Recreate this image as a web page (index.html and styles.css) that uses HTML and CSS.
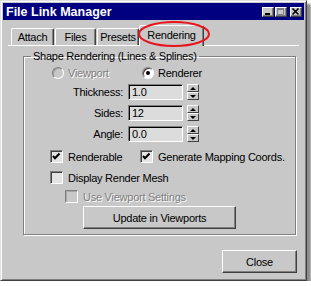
FILE: index.html
```html
<!DOCTYPE html>
<html>
<head>
    <title>File Link Manager</title>
    <link rel="stylesheet" href="styles.css">
</head>
<body>
    <div class="window">
        <div class="titlebar">
            <span class="title">File Link Manager</span>
            <div class="caption-buttons">
                <span class="cap-btn"><svg width="10" height="8" viewBox="0 0 10 8"><rect x="2" y="5" width="5" height="2" fill="#000"/></svg></span>
                <span class="cap-btn"><svg width="10" height="8" viewBox="0 0 10 8"><rect x="1.5" y="0.5" width="6" height="6" fill="none" stroke="#808080"/><rect x="1" y="0" width="7" height="2" fill="#808080"/></svg></span>
                <span class="cap-btn close-cap"><svg width="10" height="8" viewBox="0 0 10 8"><path d="M1.5 0.5 L7.5 6.5 M7.5 0.5 L1.5 6.5" stroke="#000" stroke-width="1.6"/></svg></span>
            </div>
        </div>

        <div class="tabs">
            <div class="tab tab-attach">Attach</div>
            <div class="tab tab-files">Files</div>
            <div class="tab tab-presets">Presets</div>
            <div class="tab tab-rendering active">Rendering</div>
        </div>

        <div class="panel">
            <fieldset class="group">
                <legend>Shape Rendering (Lines &amp; Splines)</legend>

                <div class="radio-row">
                    <div class="radio disabled"><span class="radio-dot"></span>Viewport</div>
                    <div class="radio"><span class="radio-dot checked"></span>Renderer</div>
                </div>

                <div class="spin-rows">
                    <div class="spin-row">
                        <span class="spin-label">Thickness:</span>
                        <span class="field">1.0</span>
                        <span class="spinner"><span class="spin-up"></span><span class="spin-down"></span></span>
                    </div>
                    <div class="spin-row">
                        <span class="spin-label">Sides:</span>
                        <span class="field">12</span>
                        <span class="spinner"><span class="spin-up"></span><span class="spin-down"></span></span>
                    </div>
                    <div class="spin-row">
                        <span class="spin-label">Angle:</span>
                        <span class="field">0.0</span>
                        <span class="spinner"><span class="spin-up"></span><span class="spin-down"></span></span>
                    </div>
                </div>

                <div class="check-row">
                    <div class="check"><span class="box"><svg width="11" height="11" viewBox="0 0 11 11"><path d="M2 5 L4 7.2 L8.5 2.5" fill="none" stroke="#000" stroke-width="2"/></svg></span>Renderable</div>
                    <div class="check"><span class="box"><svg width="11" height="11" viewBox="0 0 11 11"><path d="M2 5 L4 7.2 L8.5 2.5" fill="none" stroke="#000" stroke-width="2"/></svg></span>Generate Mapping Coords.</div>
                </div>
                <div class="check-row">
                    <div class="check"><span class="box"></span>Display Render Mesh</div>
                </div>
                <div class="check-row sub">
                    <div class="check disabled"><span class="box"></span>Use Viewport Settings</div>
                </div>

                <div class="button update">Update in Viewports</div>
            </fieldset>
        </div>

        <div class="footer">
            <div class="button close">Close</div>
        </div>

        <!-- red marker drawn over the Rendering tab -->
        <svg class="highlight" width="74" height="28" viewBox="0 0 74 28">
            <ellipse cx="37" cy="14" rx="35" ry="12" fill="none" stroke="#e8141c" stroke-width="2"/>
        </svg>
    </div>
</body>
</html>
```

FILE: styles.css
```css
body {
    margin: 0;
    background: #fff;
    font-family: "Liberation Sans", Arial, sans-serif;
    font-size: 11px;
    letter-spacing: -0.25px;
    color: #000;
}

.window {
    position: relative;
    width: 307px;
    height: 281px;
    box-sizing: border-box;
    background: #c8c8c8;
    border: 1px solid;
    border-color: #e0e0e0 #404040 #404040 #e0e0e0;
    box-shadow: inset 1px 1px #fff, inset -1px -1px #808080, 4px 4px 2px rgba(0, 0, 0, 0.45);
    padding: 2px;
    display: flex;
    flex-direction: column;
}

.titlebar {
    height: 17px;
    background: #000080;
    display: flex;
    align-items: center;
    justify-content: space-between;
    padding: 0 2px 0 3px;
}

.title {
    color: #fff;
    font-weight: bold;
    font-size: 12.5px;
    letter-spacing: 0;
}

.caption-buttons {
    display: flex;
    gap: 1px;
}

.cap-btn {
    width: 12px;
    height: 10px;
    box-sizing: border-box;
    background: #c8c8c8;
    border: 1px solid;
    border-color: #fff #404040 #404040 #fff;
    box-shadow: inset -1px -1px #808080;
    display: flex;
    align-items: center;
    justify-content: center;
}

.close-cap {
    margin-left: 2px;
}

.tabs {
    display: flex;
    align-items: flex-end;
    gap: 1px;
    height: 20px;
    margin: 5px 0 0 8px;
}

.tab {
    height: 17px;
    box-sizing: border-box;
    padding-top: 1px;
    text-align: center;
    line-height: 15px;
    border: 1px solid;
    border-bottom: none;
    border-color: #fff #404040 transparent #fff;
    border-radius: 2px 2px 0 0;
    box-shadow: inset -1px 0 #808080;
}

.tab-attach {
    width: 43px;
}

.tab-files {
    width: 41px;
}

.tab-presets {
    width: 42px;
}

.tab-rendering {
    width: 65px;
}

.tab.active {
    position: relative;
    height: 21px;
    margin: 0 0 -1px -1px;
    padding-top: 2px;
    background: #c8c8c8;
}

.panel {
    margin: 0 5px 0 5px;
    border-top: 1px solid #fff;
}

.group {
    margin: 4px 3px 0 15px;
    padding: 0 0 5px;
    min-inline-size: 0;
    border: 1px solid #808080;
    box-shadow: 1px 1px #fff, inset 1px 1px #fff;
}

.group legend {
    margin-left: 7px;
    padding: 0 2px;
    line-height: 13px;
}

.radio-row {
    display: flex;
    margin: 3px 0 0 28px;
    height: 13px;
}

.radio {
    width: 90px;
    display: flex;
    align-items: center;
    gap: 4px;
}

.radio-dot {
    width: 12px;
    height: 12px;
    box-sizing: border-box;
    border-radius: 50%;
    border: 1px solid;
    border-color: #808080 #fff #fff #808080;
    background: #fff;
    box-shadow: inset 1px 1px #404040;
    display: flex;
    align-items: center;
    justify-content: center;
}

.radio-dot.checked::after {
    content: "";
    width: 4px;
    height: 4px;
    border-radius: 50%;
    background: #000;
}

.disabled {
    color: #808080;
    text-shadow: 1px 1px #fff;
}

.radio.disabled .radio-dot {
    background: #c8c8c8;
    box-shadow: inset 1px 1px #a0a0a0;
}

.spin-rows {
    display: flex;
    flex-direction: column;
    gap: 5px;
    margin-top: 5px;
}

.spin-row {
    display: flex;
    align-items: center;
    height: 16px;
}

.spin-label {
    width: 99px;
    text-align: right;
    margin-right: 5px;
}

.field {
    width: 55px;
    height: 16px;
    box-sizing: border-box;
    background: #dcdcdc;
    border: 1px solid;
    border-color: #808080 #fff #fff #808080;
    box-shadow: inset 1px 1px #000;
    padding: 1px 0 0 3px;
    line-height: 13px;
}

.spinner {
    width: 12px;
    height: 16px;
    margin-left: 4px;
    display: flex;
    flex-direction: column;
}

.spin-up,
.spin-down {
    flex: 1;
    box-sizing: border-box;
    border: 1px solid;
    border-color: #fff #404040 #404040 #fff;
    background: #c8c8c8;
    display: flex;
    align-items: center;
    justify-content: center;
}

.spin-up::after,
.spin-down::after {
    content: "";
    border-left: 3px solid transparent;
    border-right: 3px solid transparent;
}

.spin-up::after {
    border-bottom: 3px solid #000;
}

.spin-down::after {
    border-top: 3px solid #000;
}

.check-row {
    display: flex;
    height: 13px;
    margin: 8px 0 0 26px;
}

.check-row.sub {
    margin: 6px 0 0 41px;
}

.check {
    min-width: 90px;
    display: flex;
    align-items: center;
    gap: 5px;
}

.box {
    width: 13px;
    height: 13px;
    box-sizing: border-box;
    border: 1px solid;
    border-color: #808080 #fff #fff #808080;
    box-shadow: inset 1px 1px #404040;
    background: #e4e4e4;
    display: flex;
    align-items: center;
    justify-content: center;
}

.check.disabled .box {
    background: #c8c8c8;
    box-shadow: inset 1px 1px #a8a8a8;
}

.button {
    height: 23px;
    box-sizing: border-box;
    border: 1px solid;
    border-color: #fff #404040 #404040 #fff;
    box-shadow: inset -1px -1px #808080;
    display: flex;
    align-items: center;
    justify-content: center;
}

.update {
    width: 153px;
    margin: 3px 0 0 59px;
}

.footer {
    margin-top: auto;
    display: flex;
    justify-content: flex-end;
    padding: 0 7px 5px 0;
}

.close {
    width: 75px;
}

.highlight {
    position: absolute;
    left: 136px;
    top: 19px;
}
```
